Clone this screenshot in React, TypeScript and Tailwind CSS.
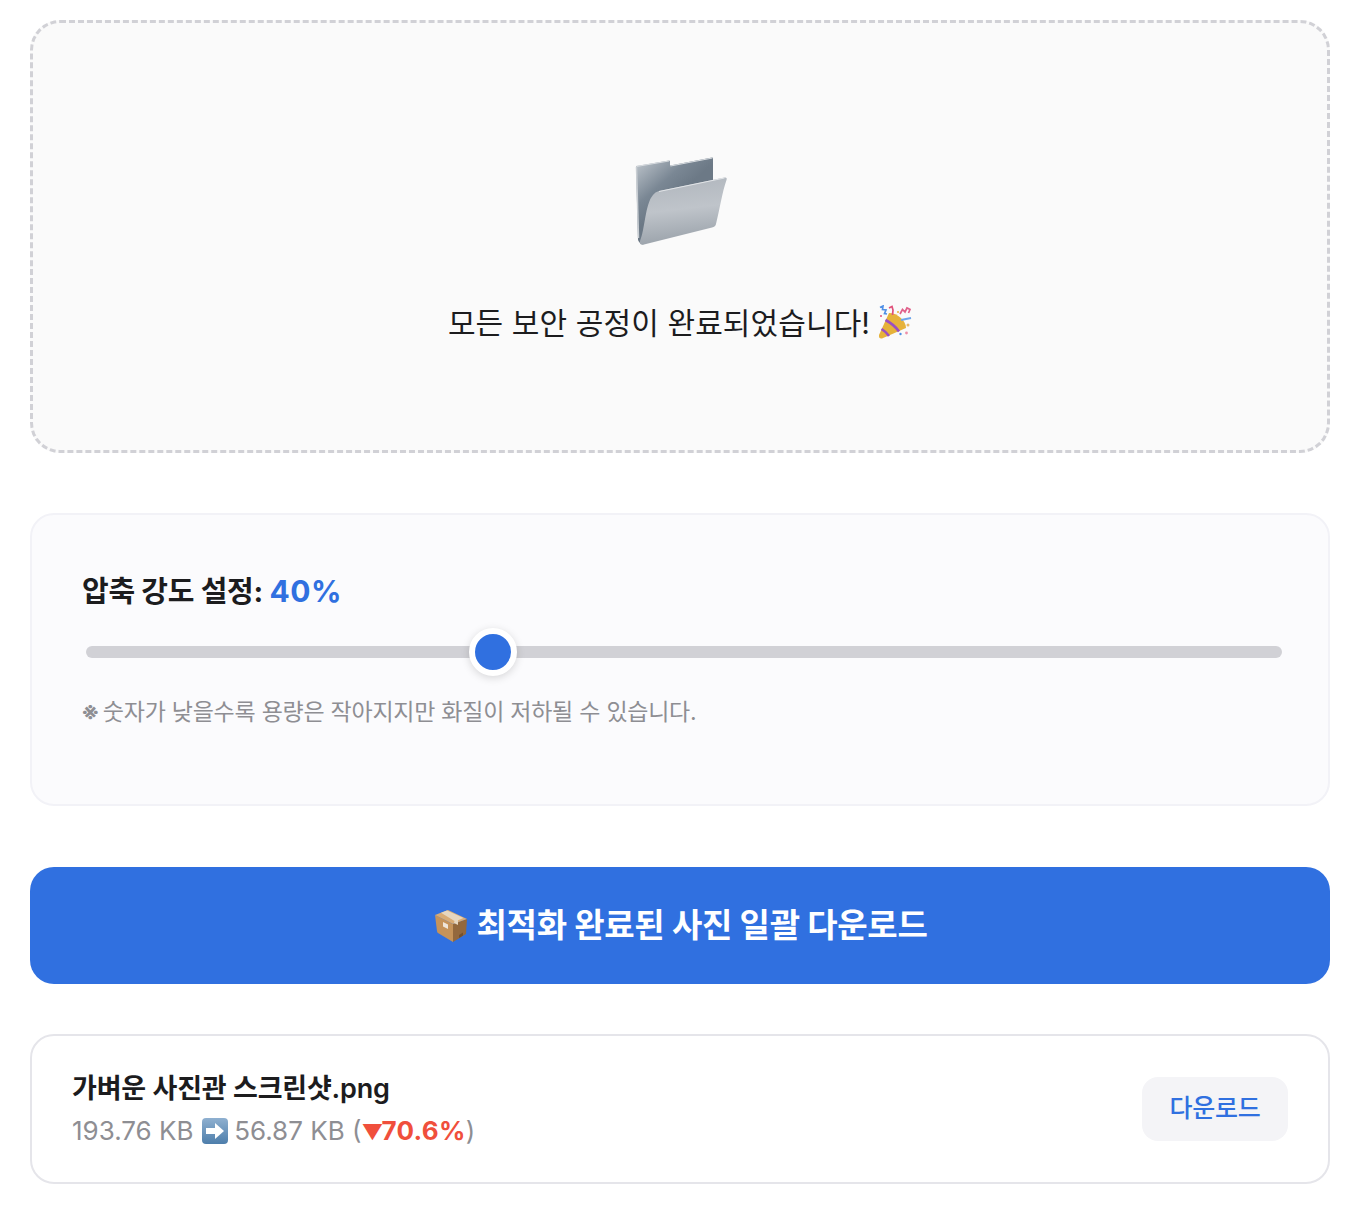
const fontStack = { fontFamily: '"Inter", "Noto Sans CJK KR", sans-serif' };

function FolderIcon() {
  return (
    <svg width="96" height="96" viewBox="0 0 96 96" fill="none">
      <defs>
        <linearGradient id="folderBack" x1="0.1" y1="0.05" x2="0.45" y2="0.5">
          <stop offset="0" stopColor="#b2bac2" />
          <stop offset="0.6" stopColor="#7a8794" />
          <stop offset="1" stopColor="#6c7986" />
        </linearGradient>
        <linearGradient id="folderFront" x1="0.2" y1="0" x2="0.35" y2="1">
          <stop offset="0" stopColor="#b0b6bd" />
          <stop offset="0.5" stopColor="#bfc4ca" />
          <stop offset="1" stopColor="#9aa2aa" />
        </linearGradient>
      </defs>
      <path d="M4 16 37 10.500 Q38 10.400 38 11.500 V15.500 L80 7.500 Q81 7.300 81 8.500 V45 L12 94 Q8 95 6 90 L4 17Z" fill="url(#folderBack)" />
      <path d="M4.500 16.500 37 11 M38.500 16 80.500 8" stroke="#d8dce0" strokeWidth="1" />
      <path d="M4.500 17 L6.500 88" stroke="#c9ced3" strokeWidth="1.500" />
      <path d="M27 41 92.500 27.500 Q95.500 27 94.500 30 C90 43 88 58 84 74 Q83.500 76.500 80 77.500 L12 94.500 Q7 95.500 8 91 C13 80 13 54 21 45 Q23 42 27 41Z" fill="url(#folderFront)" />
      <path d="M27 41.500 92.500 28" stroke="#e2e5e8" strokeWidth="1" />
    </svg>
  );
}

function PartyIcon() {
  return (
    <svg width="34" height="36" viewBox="0 0 34 36" fill="none">
      <path d="M11 8 C20 8 28 16 28 23 L4 33.500 Q0.500 34 1 30Z" fill="#e6b23a" />
      <path d="M7.500 15 C13 18 18 22 21 26.500" stroke="#9a4fc2" strokeWidth="2.600" />
      <path d="M3.500 24 C6 25.500 9 28 11 31" stroke="#9a4fc2" strokeWidth="2.600" />
      <path d="M23 15 33 13" stroke="#6ea5ea" strokeWidth="2.200" />
      <path d="M2 2.500 5 1 4.500 4.500 8 5 6.500 8.500 9 9" stroke="#4f8fe6" strokeWidth="1.700" />
      <path d="M11 3 14 1.500 15 5 14.500 10" stroke="#e0507a" strokeWidth="1.700" />
      <path d="M22 9 24.500 4.500 27 7 29 3 32 4.500 30.500 8" stroke="#e0608a" strokeWidth="1.700" />
      <circle cx="30" cy="20" r="1.500" fill="#e8b96a" />
      <circle cx="28.500" cy="28" r="1.400" fill="#ee8fa8" />
      <circle cx="20" cy="7" r="1" fill="#e6b23a" />
      <circle cx="22.500" cy="29" r="1.200" fill="#4f8fe6" />
      <circle cx="3" cy="11" r="1" fill="#e0507a" />
    </svg>
  );
}

function BoxIcon() {
  return (
    <svg width="36" height="36" viewBox="0 0 36 36" fill="none">
      <path d="M2 7 20 16V34L5 25Q4 24.500 4 23Z" fill="#c5935a" />
      <path d="M20 16 34 11 33 26 20 34Z" fill="#93683d" />
      <path d="M2 7 15 2 34 11 20 16Z" fill="#d8ab75" />
      <path d="M8 4.700 14 2.500 30.500 10 25 12.300 25 17 21 15 21.500 13Z" fill="#e6d6bf" />
      <path d="M10 14 15 16.500V21L10 18.500Z" fill="#efe6da" />
      <path d="M26 27 30 24.500V27.500L26 30Z" fill="#74502d" />
    </svg>
  );
}

function ArrowIcon() {
  return (
    <svg width="28" height="28" viewBox="0 0 28 28" fill="none" className="inline-block align-[-5px] -mr-[2px]">
      <defs>
        <linearGradient id="arrowBg" x1="0" y1="0" x2="0" y2="1">
          <stop offset="0" stopColor="#8fb0d0" />
          <stop offset="1" stopColor="#4e7eab" />
        </linearGradient>
      </defs>
      <rect x="1" y="1" width="26" height="26" rx="4" fill="url(#arrowBg)" />
      <path d="M5 11H14V6L23 14 14 22V17H5Z" fill="#fff" />
    </svg>
  );
}

export default function App() {
  return (
    <div className="w-[1300px] ml-[30px] pt-5 pb-[46px] flex flex-col" style={fontStack}>
      {/* Drop zone */}
      <div className="h-[433px] rounded-[30px] border-[3px] border-dashed border-[#d1d1d6] bg-[#fafafa] flex flex-col items-center">
        <div className="mt-[127px]">
          <FolderIcon />
        </div>
        <div className="mt-[57px] flex items-center gap-2 text-[30px] leading-[40px] text-[#1c1c1e] tracking-[0.1px]">
          <span>모든 보안 공정이 완료되었습니다!</span>
          <PartyIcon />
        </div>
      </div>

      {/* Strength slider */}
      <div className="mt-[60px] h-[293px] rounded-[24px] border-2 border-[#f2f2f7] bg-[#fbfbfd] px-[50px] pt-[54px]">
        <div className="text-[29px] leading-[44px] font-bold text-[#1c1c1e] tracking-[-0.3px]">
          압축 강도 설정: <span className="text-[30px] tracking-[0.5px] text-[#3070e0]">40%</span>
        </div>
        <input
          type="range"
          min={10}
          max={100}
          defaultValue={40}
          className="block mt-[14px] ml-1 w-[1196px] h-12 appearance-none bg-transparent [&::-webkit-slider-runnable-track]:h-3 [&::-webkit-slider-runnable-track]:rounded-md [&::-webkit-slider-runnable-track]:bg-[#d1d1d6] [&::-webkit-slider-thumb]:appearance-none [&::-webkit-slider-thumb]:-mt-[18px] [&::-webkit-slider-thumb]:h-12 [&::-webkit-slider-thumb]:w-12 [&::-webkit-slider-thumb]:rounded-full [&::-webkit-slider-thumb]:border-[6px] [&::-webkit-slider-thumb]:border-white [&::-webkit-slider-thumb]:bg-[#3070e0] [&::-webkit-slider-thumb]:shadow-[0_2px_8px_rgba(0,0,0,0.15)]"
        />
        <p className="mt-[18px] -ml-px text-[23px] leading-[36px] text-[#8e8e93] tracking-[-0.25px]">
          <span className="font-bold tracking-[-3px]">※</span> 숫자가 낮을수록 용량은 작아지지만 화질이 저하될 수 있습니다.
        </p>
      </div>

      {/* Download all */}
      <button
        type="button"
        className="mt-[61px] h-[117px] rounded-[24px] bg-[#3070e0] flex items-center justify-center gap-2 text-[33px] font-bold text-white tracking-[-0.3px]"
      >
        <BoxIcon />
        <span>최적화 완료된 사진 일괄 다운로드</span>
      </button>

      {/* Result row */}
      <div className="mt-[50px] h-[150px] rounded-[24px] border-2 border-[#e5e5ea] bg-white pl-10 pr-10 flex items-center justify-between">
        <div className="pt-1">
          <div className="text-[27px] leading-[40px] font-semibold text-[#1c1c1e] tracking-[-0.2px]">가벼운 사진관 스크린샷.png</div>
          <div className="mt-[2px] text-[26px] leading-[40px] text-[#8e8e93]">
            193.76 KB <ArrowIcon /> 56.87 KB (
            <span className="font-bold text-[#f04f3c]">
              <span className="text-[21px]">▼</span>
              <span className="-ml-[2px] tracking-[0.3px]">70.6%</span>
            </span>
            )
          </div>
        </div>
        <button type="button" className="w-[146px] h-16 rounded-2xl bg-[#f4f4f7] text-[25px] font-medium text-[#3070e0] tracking-[-0.3px]">
          다운로드
        </button>
      </div>
    </div>
  );
}
